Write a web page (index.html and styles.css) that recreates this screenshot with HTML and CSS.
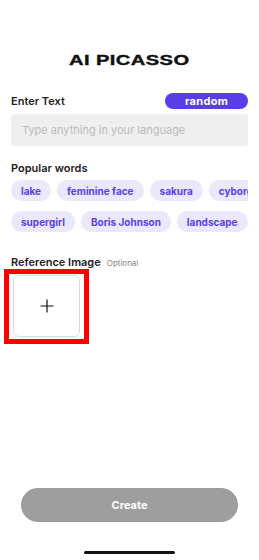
FILE: index.html
```html
<!DOCTYPE html>
<html>
<head>
<meta charset="utf-8">
<link rel="stylesheet" href="styles.css">
</head>
<body>
<div class="screen">
  <header class="brand"><span class="brand-text">AI PICASSO</span></header>

  <section class="enter">
    <div class="row-head">
      <span class="label">Enter Text</span>
      <span class="random">random</span>
    </div>
    <div class="input">Type anything in your language</div>
  </section>

  <section class="popular">
    <div class="label">Popular words</div>
    <div class="chips">
      <div class="chip-row">
        <span class="chip">lake</span>
        <span class="chip">feminine face</span>
        <span class="chip">sakura</span>
        <span class="chip">cyborg</span>
        <span class="chip">anime</span>
      </div>
      <div class="chip-row">
        <span class="chip">supergirl</span>
        <span class="chip">Boris Johnson</span>
        <span class="chip">landscape</span>
        <span class="chip">cat</span>
      </div>
    </div>
  </section>

  <section class="reference">
    <div class="ref-head"><span class="label">Reference Image</span><span class="optional">Optional</span></div>
    <div class="highlight">
      <div class="upload">
        <svg width="14" height="14" viewBox="0 0 14 14"><path d="M7 0.5V13.5M0.5 7H13.5" stroke="#111" stroke-width="1.2" fill="none"/></svg>
      </div>
    </div>
  </section>

  <footer class="bottom">
    <div class="create">Create</div>
    <div class="home-bar"></div>
  </footer>
</div>
</body>
</html>
```

FILE: styles.css
```css
* { box-sizing: border-box; }
html, body { margin: 0; padding: 0; background: #fff; }
body { font-family: Inter, "Liberation Sans", sans-serif; color: #222; }
.screen {
  width: 259px;
  height: 560px;
  display: flex;
  flex-direction: column;
  padding: 0 11px;
  overflow: hidden;
}
.brand {
  margin-top: 50px;
  height: 20px;
  display: flex;
  justify-content: center;
  align-items: center;
}
.brand-text {
  display: inline-block;
  font-family: "Liberation Sans", Arial, sans-serif;
  font-weight: 700;
  font-size: 15.5px;
  letter-spacing: 0.3px;
  color: #111;
  transform: scaleX(1.3);
  -webkit-text-stroke: 0.4px #111;
}
.enter { margin-top: 23px; }
.row-head {
  display: flex;
  justify-content: space-between;
  align-items: center;
  height: 16px;
}
.label {
  font-size: 11px;
  font-weight: 600;
  color: #222;
}
.random {
  width: 83px;
  height: 16px;
  border-radius: 8px;
  background: #5b3de8;
  color: #fff;
  font-size: 11px;
  font-weight: 700;
  letter-spacing: 0.3px;
  display: flex;
  align-items: center;
  justify-content: center;
}
.input {
  margin-top: 5px;
  height: 32px;
  background: #efefef;
  border-radius: 3px;
  padding-left: 11px;
  display: flex;
  align-items: center;
  font-size: 11px;
  color: #bcbcbc;
}
.popular { margin-top: 15px; }
.popular .label { line-height: 14px; }
.chips {
  margin-top: 5px;
  width: 237px;
  overflow: hidden;
  display: flex;
  flex-direction: column;
  gap: 10px;
}
.chip-row {
  display: flex;
  gap: 6px;
  flex-wrap: nowrap;
}
.chip {
  flex: none;
  height: 21px;
  padding: 0 10px;
  border-radius: 11px;
  background: #ece8fb;
  color: #5b3de8;
  font-size: 10px;
  font-weight: 700;
  letter-spacing: 0;
  display: flex;
  align-items: center;
}
.reference { margin-top: 23px; }
.ref-head {
  display: flex;
  align-items: baseline;
  gap: 6px;
  line-height: 14px;
}
.optional {
  font-size: 8px;
  color: #888;
}
.highlight {
  margin-left: -7px;
  margin-top: -1px;
  width: 85px;
  height: 75px;
  border: 5px solid #ff0000;
  padding: 1px 4px;
}
.upload {
  width: 67px;
  height: 62px;
  border: 1px solid #dcdcdc;
  border-radius: 6px;
  display: flex;
  align-items: center;
  justify-content: center;
  background: #fff;
}
.bottom {
  margin-top: auto;
  display: flex;
  flex-direction: column;
  align-items: center;
  padding-bottom: 6px;
}
.create {
  width: 217px;
  height: 34px;
  border-radius: 17px;
  background: #9e9e9e;
  color: #fff;
  font-size: 11px;
  font-weight: 700;
  display: flex;
  align-items: center;
  justify-content: center;
}
.home-bar {
  margin-top: 29px;
  width: 91px;
  height: 3px;
  border-radius: 2px;
  background: #111;
}
```
